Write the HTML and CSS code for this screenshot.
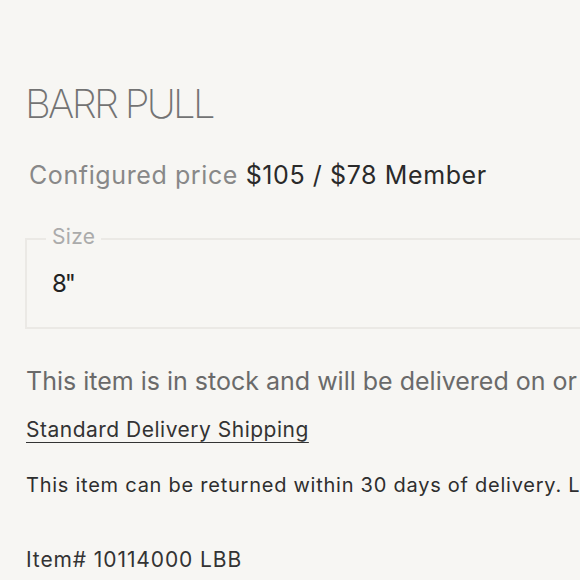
FILE: index.html
```html
<!DOCTYPE html>
<html>
<head>
<meta charset="utf-8">
<link rel="stylesheet" href="styles.css">
</head>
<body>
<main class="product">
  <h1 class="title">BARR PULL</h1>
  <p class="price"><span class="price-label">Configured price</span> <span class="price-value">$105 / $78 Member</span></p>
  <fieldset class="option">
    <legend class="option-label">Size</legend>
    <div class="option-value">8"</div>
  </fieldset>
  <p class="stock">This item is in stock and will be delivered on or before your selected date.</p>
  <p class="shipping"><a href="#" class="shipping-link">Standard Delivery Shipping</a></p>
  <p class="returns">This item can be returned within 30 days of delivery. Learn more about our return policy.</p>
  <p class="sku">Item# 10114000 LBB</p>
</main>
</body>
</html>
```
FILE: styles.css
```css
html, body {
  margin: 0;
  padding: 0;
  background: #f7f6f3;
  overflow: hidden;
}
body {
  font-family: Inter, "Liberation Sans", sans-serif;
  color: #333;
}
.product {
  padding: 80px 0 0 26px;
  width: 900px;
  white-space: nowrap;
}
.title {
  margin: 0 0 0 -1px;
  font-weight: 200;
  font-size: 40px;
  line-height: 48px;
  letter-spacing: -2.7px;
  color: #737373;
}
.price {
  margin: 32px 0 0 3px;
  font-size: 25px;
  line-height: 30px;
  letter-spacing: 0.6px;
}
.price-label { color: #888; }
.price-value { color: #2a2a2a; }
.option {
  margin: 35px 0 0 -1px;
  padding: 17px 25px 28px 25px;
  border: 2px solid #ebe9e5;
  width: 800px;
}
.option-label {
  margin-left: -6px;
  padding: 0 6px 3px 6px;
  font-size: 21px;
  line-height: 24px;
  letter-spacing: 0.3px;
  color: #ababab;
}
.option-value {
  font-size: 24px;
  line-height: 30px;
  letter-spacing: -2px;
  color: #222;
}
.stock {
  margin: 36px 0 0 0;
  font-size: 25px;
  line-height: 32px;
  color: #6a6a6a;
}
.shipping {
  margin: 20px 0 0 0;
  font-size: 21px;
  line-height: 26px;
  letter-spacing: 0.5px;
}
.shipping-link {
  color: #333;
  text-decoration: underline;
  text-underline-offset: 5px;
  text-decoration-thickness: 1px;
}
.returns {
  margin: 30px 0 0 0;
  font-size: 20px;
  line-height: 24px;
  letter-spacing: 0.75px;
  color: #2e2e2e;
}
.sku {
  margin: 50px 0 0 0;
  font-size: 21px;
  line-height: 26px;
  letter-spacing: 0.9px;
  color: #333;
}
```
